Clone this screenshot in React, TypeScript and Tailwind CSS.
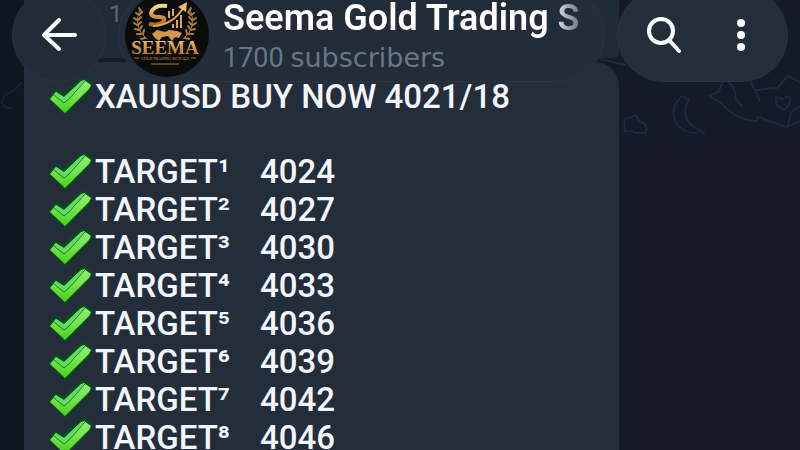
const targets = [
  { mark: "¹", price: "4024" },
  { mark: "²", price: "4027" },
  { mark: "³", price: "4030" },
  { mark: "⁴", price: "4033" },
  { mark: "⁵", price: "4036" },
  { mark: "⁶", price: "4039" },
  { mark: "⁷", price: "4042" },
  { mark: "⁸", price: "4046" },
];

function CheckMark() {
  return (
    <svg viewBox="0 0 49 38" className="h-[38px] w-[49px] shrink-0" aria-hidden="true">
      <defs>
        <linearGradient id="check-fill" x1="0" y1="0" x2="0" y2="1">
          <stop offset="0" stopColor="#8ff07a" />
          <stop offset="0.5" stopColor="#76e04e" />
          <stop offset="1" stopColor="#45d01c" />
        </linearGradient>
      </defs>
      <path d="M4 20 L10 13 L18 17 L35 2 L39 1 L45 6 L43 12 L20 35 L18 35 Z" fill="#0a6a16" stroke="#0b4a1b" strokeWidth="3" strokeLinejoin="round" />
      <path d="M4 21 L10 14 L18 20 L38 2 L45 7 L43 11 L19 35 Z" fill="url(#check-fill)" />
      <path d="M8 16 L10 14 L18 19 L35 3 L39 2 L19 24 Z" fill="#5fdc6a" />
      <path d="M8 17 L18 25 L23 21 L39 3" fill="none" stroke="#12801a" strokeWidth="1" strokeLinejoin="round" />
    </svg>
  );
}

function Laurel() {
  return (
    <g fill="none" stroke="#a87f3c" strokeLinecap="round">
      <path d="M24 39 Q9 28 17 9" strokeWidth="1" />
      <path d="M18 11 l-2 -3 M16 15 l-3 -2 M16 15 l3 -3 M14 20 l-3 -2 M15 20 l3 -3 M14 25 l-3 -2 M15 25 l3 -3 M16 30 l-4 -1 M17 29 l2 -3 M18 34 l-4 0 M20 34 l1 -4 M22 38 l-4 1" strokeWidth="2" />
    </g>
  );
}

function Avatar() {
  return (
    <svg viewBox="0 0 84 84" className="size-[84px] shrink-0" role="img" aria-label="Seema">
      <defs>
        <linearGradient id="gold" x1="0" y1="0" x2="0" y2="1">
          <stop offset="0" stopColor="#f6d88f" />
          <stop offset="0.5" stopColor="#d49a45" />
          <stop offset="1" stopColor="#a86d2a" />
        </linearGradient>
      </defs>
      <circle cx="42" cy="42" r="42" fill="#0c0b0c" />
      <g transform="translate(-2 4)">
        <g transform="translate(0 3)">
          <Laurel />
          <g transform="translate(84 0) scale(-1 1)">
            <Laurel />
          </g>
        </g>
        <path d="M44 9 Q31 7 28 16 Q28 20 36 20 Q44 20 40 25 Q36 29 26 27" fill="none" stroke="url(#gold)" strokeWidth="4" />
        <path d="M30 29 Q50 28 60 11" fill="none" stroke="#d8a657" strokeWidth="2" />
        <path d="M55 10 L64 5 L63 15 Z" fill="#e7bd6b" />
        <path d="M46 14 v7 M50 12 v7 M50 27 v4 M54 23 v8 M58 18 v13" stroke="#d8a657" strokeWidth="2" />
        <path d="M29 37 L34 33 L42 35 L46 33 L54 34 L59 36 L56 41 L52 40 L49 44 L45 39 L39 40 L36 44 L32 41 Z" fill="#d3994b" />
        <text x="42" y="57" textAnchor="middle" fill="url(#gold)" className="font-['Liberation_Serif',serif] text-[19px] font-bold">SEEMA</text>
        <path d="M11 61 h5 M68 61 h5 M28 67 h28" stroke="#a87938" strokeWidth="1" />
        <text x="42" y="63" textAnchor="middle" fill="#c99a55" className="font-['Liberation_Serif',serif] text-[4px]">GOLD TRADING SIGNALS</text>
      </g>
    </svg>
  );
}

function Wallpaper() {
  return (
    <svg className="absolute top-0 right-0 h-[150px] w-[200px]" viewBox="0 0 200 150" fill="none" stroke="#22283d" strokeWidth="2" strokeLinejoin="round" aria-hidden="true">
      <path d="M0 59 L26 65" />
      <path d="M25 132 Q22 116 30 118 Q37 112 39 121 Q50 125 45 133 L36 133 Q31 129 25 132 Z" />
      <path d="M82 96 Q69 107 76 123 Q83 133 97 133 M82 96 L89 100 Q81 111 90 124 L105 134" />
      <path d="M123 81 L119 91 L109 96 Q115 100 120 102 Q137 121 157 121 L158 117 L187 127 L200 121 M109 96 L114 100 M128 81 Q137 91 135 98 L142 106 M151 82 L160 101 M155 90 L177 88 L188 76 L200 82 M178 98 Q174 94 177 106 L184 110 Q193 103 188 96 L183 99 Z M187 127 L192 111 L200 106" />
    </svg>
  );
}

export default function App() {
  return (
    <div className="relative h-screen overflow-hidden bg-[#141a28] font-[Roboto,'Liberation_Sans',sans-serif]">
      <div className="absolute inset-y-0 left-0 w-6 bg-[#0f1720]" />
      <Wallpaper />
      <svg className="absolute top-[60px] left-0 h-[60px] w-6" viewBox="0 0 24 60" fill="none" stroke="#1a242e" strokeWidth="2" aria-hidden="true">
        <path d="M22 22 Q16 30 7 34 Q0 39 3 45 Q6 49 12 48" />
      </svg>

      <main className="relative flex flex-col gap-1 pr-[181px] pl-6">
        <p className="h-[58px] rounded-b-md bg-[#202b38] pl-[85px] text-[24px] leading-7 text-[#596675]">1</p>
        <article className="min-h-[400px] rounded-t-[24px] rounded-tl-md bg-[#232e3a] pt-4 pl-[22px] text-[33px] leading-[38px] font-medium text-[#f3f6fc]">
          <p className="flex">
            <CheckMark />
            XAUUSD BUY NOW 4021/18
          </p>
          <ul className="mt-[37px]">
            {targets.map((t) => (
              <li key={t.price} className="flex">
                <CheckMark />
                <span className="w-[165px]">TARGET{t.mark}</span>
                <span>{t.price}</span>
              </li>
            ))}
          </ul>
        </article>
      </main>

      <header className="absolute inset-x-0 -top-3 flex h-[94px] gap-3 px-3">
        <button type="button" aria-label="Back" className="flex w-[94px] shrink-0 items-center justify-center rounded-full border border-[#283441] bg-[#212c39] text-white">
          <svg viewBox="0 0 36 36" className="size-9" fill="none" stroke="currentColor" strokeWidth="4" strokeLinecap="round" strokeLinejoin="round" aria-hidden="true">
            <path d="M34 18 H3 M18 3 L3 18 L18 32" />
          </svg>
        </button>
        <div className="flex min-w-0 flex-1 items-center gap-3.5 overflow-hidden rounded-full border border-[#283441] bg-[#222d39] pl-1.5">
          <Avatar />
          <div className="min-w-0 flex-1 pt-1">
            <h1 className="w-[364px] overflow-hidden bg-linear-to-r from-white from-90% to-[#4b5561] bg-clip-text text-[36px] leading-[42px] font-semibold whitespace-nowrap text-transparent">
              Seema Gold Trading S
            </h1>
            <p className="text-[27px] leading-[38px] text-[#687786]">
              1700 <span className="font-['DejaVu_Sans',sans-serif]">subscribers</span>
            </p>
          </div>
        </div>
        <div className="flex w-[171px] shrink-0 items-center justify-between rounded-full border border-[#283441] bg-[#232e3a] pr-[41px] pl-7 text-white">
          <button type="button" aria-label="Search">
            <svg viewBox="0 0 36 38" className="h-[38px] w-9" fill="none" stroke="currentColor" strokeWidth="4" strokeLinecap="round" aria-hidden="true">
              <circle cx="15" cy="15" r="12" />
              <path d="M23 24 L33 35" />
            </svg>
          </button>
          <button type="button" aria-label="More options">
            <svg viewBox="0 0 10 34" className="h-[34px] w-2.5" fill="currentColor" aria-hidden="true">
              <circle cx="5" cy="5" r="4" />
              <circle cx="5" cy="17" r="4" />
              <circle cx="5" cy="29" r="4" />
            </svg>
          </button>
        </div>
      </header>
    </div>
  );
}
